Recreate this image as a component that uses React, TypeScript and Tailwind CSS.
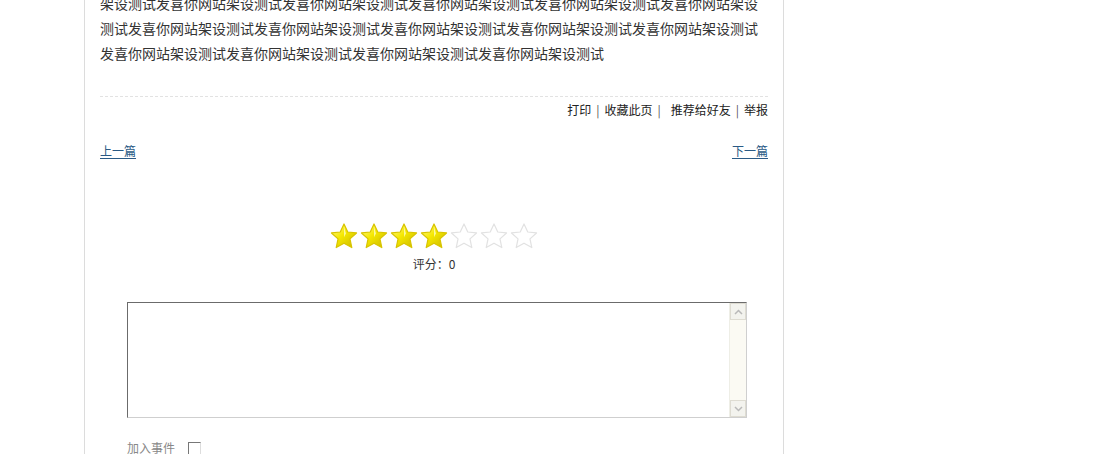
import React from "react";

const unit = "发喜你网站架设测试";
function seq(start: number, n: number) {
  let s = "";
  for (let i = 0; i < n; i++) s += unit[(start + i) % 9];
  return s;
}

function Star({ filled }: { filled: boolean }) {
  const d =
    "M12 1.6l3.1 6.6 7.2.8-5.4 4.9 1.5 7.1L12 17.4 5.6 21l1.5-7.1L1.7 9l7.2-.8z";
  return (
    <svg width="30" height="28" viewBox="0 0 24 23" className="block">
      <defs>
        <linearGradient id="sg" x1="0" y1="0" x2="1" y2="1">
          <stop offset="0" stopColor="#fffaa0" />
          <stop offset="0.45" stopColor="#f5e800" />
          <stop offset="1" stopColor="#c9b600" />
        </linearGradient>
      </defs>
      {filled ? (
        <>
          <path d={d} fill="url(#sg)" stroke="#d8c400" strokeWidth="1" strokeLinejoin="round" />
          <path d="M12 4l1.6 5.5L12 12.5z" fill="#fffde0" opacity="0.7" />
        </>
      ) : (
        <path d={d} fill="#ffffff" stroke="#e2e2e2" strokeWidth="1" strokeLinejoin="round" />
      )}
    </svg>
  );
}

export default function App() {
  const font = { fontFamily: '"Noto Sans CJK SC", "Noto Sans", sans-serif' };
  return (
    <div className="w-[1094px] h-[454px] overflow-hidden bg-white" style={font}>
      <div className="ml-[84px] w-[700px] h-[454px] border-l border-r border-[#dcdcdc] px-[15px] overflow-hidden">
        <div className="mt-[-9px] text-[14px] leading-[25px] text-[#333] whitespace-nowrap">
          <div>{seq(5, 47)}</div>
          <div>{seq(7, 47)}</div>
          <div>{seq(0, 36)}</div>
        </div>
        <div className="mt-[30px] border-t border-dashed border-[#e2e2e2] pt-[3px] flex justify-end text-[12px] leading-[20px] text-[#222]">
          <span>打印</span>
          <span className="mx-[5px] text-[#555]">|</span>
          <span>收藏此页</span>
          <span className="ml-[5px] mr-[10px] text-[#555]">|</span>
          <span>推荐给好友</span>
          <span className="mx-[5px] text-[#555]">|</span>
          <span>举报</span>
        </div>
        <div className="mt-[21px] flex justify-between text-[12px] leading-[20px] text-[#2a5a85]">
          <a className="underline underline-offset-2">上一篇</a>
          <a className="underline underline-offset-2">下一篇</a>
        </div>
        <div className="mt-[61px] flex justify-center">
          {[1, 2, 3, 4, 5, 6, 7].map((i) => (
            <Star key={i} filled={i <= 4} />
          ))}
        </div>
        <div className="mt-[6px] text-center text-[12px] leading-[16px] text-[#333]">评分：0</div>
        <div className="mt-[30px] ml-[27px] w-[620px] h-[116px] flex border-t border-l border-[#6b6b6b] border-b border-r border-b-[#cfcfcf] border-r-[#cfcfcf] bg-white">
          <div className="flex-1" />
          <div className="w-[17px] flex flex-col bg-[#fbfaf3] border-l border-[#eeeee6]">
            <div className="h-[17px] flex items-center justify-center bg-[#f3f3ee] border border-[#dedcd2]">
              <svg width="9" height="6" viewBox="0 0 9 6"><path d="M1 5l3.5-3.5L8 5" fill="none" stroke="#b9b9b9" strokeWidth="1.5" /></svg>
            </div>
            <div className="flex-1" />
            <div className="h-[17px] flex items-center justify-center bg-[#f3f3ee] border border-[#dedcd2]">
              <svg width="9" height="6" viewBox="0 0 9 6"><path d="M1 1l3.5 3.5L8 1" fill="none" stroke="#b9b9b9" strokeWidth="1.5" /></svg>
            </div>
          </div>
        </div>
        <div className="mt-[22px] ml-[27px] flex items-center text-[12px] leading-[16px] text-[#888]">
          <span>加入事件</span>
          <span className="ml-[13px] w-[13px] h-[13px] border-t border-l border-[#777] border-b border-r border-b-[#ddd] border-r-[#ddd] bg-white" />
        </div>
      </div>
    </div>
  );
}
